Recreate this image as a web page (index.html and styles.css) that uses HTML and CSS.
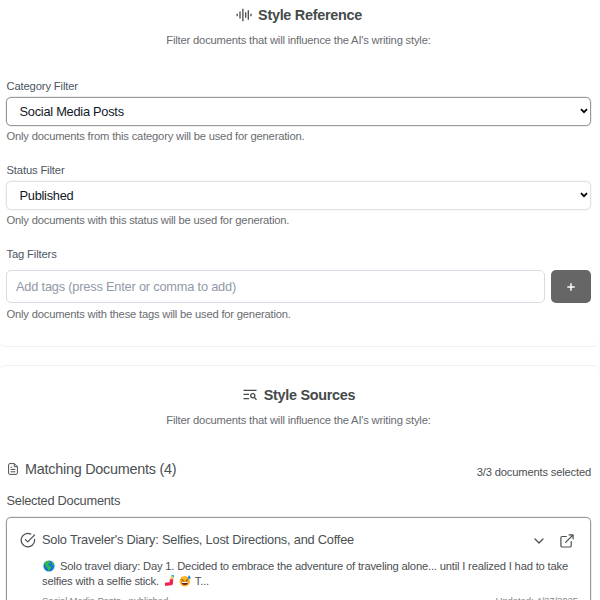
FILE: index.html
```html
<!DOCTYPE html>
<html lang="en">
<head>
<meta charset="utf-8">
<title>Style Reference</title>
<link rel="stylesheet" href="styles.css">
</head>
<body>
<section class="panel panel-reference">
  <h2 class="panel-title">
    <svg class="icon-wave" viewBox="0 0 16 14" fill="none" stroke="currentColor" stroke-width="1.3"><path d="M1.2 5.7v2.600M4 3.500v7M6.900.8v12.400M9.700 4.300v5.400M12.300 2.300v9.400M15 5.700v2.600"/></svg>
    <span>Style Reference</span>
  </h2>
  <p class="panel-intro">Filter documents that will influence the AI's writing style:</p>

  <div class="field">
    <label class="label" for="category">Category Filter</label>
    <div class="select-wrap">
      <select id="category" class="select select-active"><option>Social Media Posts</option></select>
      <svg class="select-arrow" viewBox="0 0 8 6"><path d="M1 1.2l3 3 3-3" fill="none" stroke="currentColor" stroke-width="1.7"/></svg>
    </div>
    <p class="hint">Only documents from this category will be used for generation.</p>
  </div>

  <div class="field">
    <label class="label" for="status">Status Filter</label>
    <div class="select-wrap">
      <select id="status" class="select"><option>Published</option></select>
      <svg class="select-arrow" viewBox="0 0 8 6"><path d="M1 1.2l3 3 3-3" fill="none" stroke="currentColor" stroke-width="1.7"/></svg>
    </div>
    <p class="hint">Only documents with this status will be used for generation.</p>
  </div>

  <div class="field field-tags">
    <label class="label" for="tags">Tag Filters</label>
    <div class="tag-row">
      <input id="tags" class="input" placeholder="Add tags (press Enter or comma to add)">
      <button class="add" aria-label="Add tag"><svg viewBox="0 0 8 8"><path d="M4 .3v7.4M.3 4h7.4" stroke="currentColor" stroke-width="1.5"/></svg></button>
    </div>
    <p class="hint">Only documents with these tags will be used for generation.</p>
  </div>
</section>

<section class="panel panel-sources">
  <h2 class="panel-title">
    <svg class="icon-search" viewBox="0 0 14 12" fill="none" stroke="currentColor" stroke-width="1.3"><path d="M.5 1.4h13M.5 5.4h5.5M.5 9.6h5.5"/><circle cx="9.8" cy="6.8" r="2.1"/><path d="M11.3 8.4l2.2 2.5"/></svg>
    <span>Style Sources</span>
  </h2>
  <p class="panel-intro">Filter documents that will influence the AI's writing style:</p>

  <div class="matching">
    <svg class="icon-doc" viewBox="0 0 10 12" fill="none" stroke="currentColor" stroke-width="1" stroke-linejoin="round"><path d="M6.3.6H1.8Q.6.6.6 1.8v8.4q0 1.2 1.2 1.2h6.4q1.2 0 1.2-1.2V3.7zM6.3.6v3.1h3.1M2.6 4.2h1.6M2.6 6.4h4.8M2.6 8.8h4.8"/></svg>
    <h3 class="matching-title">Matching Documents (4)</h3>
    <span class="count">3/3 documents selected</span>
  </div>
  <h4 class="selected-title">Selected Documents</h4>

  <article class="doc">
    <header class="doc-head">
      <svg class="icon-check" viewBox="0 0 16 16" fill="none" stroke="currentColor" stroke-width="1.25" stroke-linecap="round" stroke-linejoin="round"><path d="M14.600 7.400v.8A6.700 6.700 0 1 1 10.800 2.100"/><path d="M5.400 7.600l2.400 2.300 6.800-7"/></svg>
      <span class="doc-title">Solo Traveler's Diary: Selfies, Lost Directions, and Coffee</span>
      <svg class="icon-chevron" viewBox="0 0 10 6" fill="none" stroke="currentColor" stroke-width="1.3" stroke-linecap="round" stroke-linejoin="round"><path d="M1 1l4 4 4-4"/></svg>
      <svg class="icon-open" viewBox="0 0 14 14" fill="none" stroke="currentColor" stroke-width="1.2" stroke-linecap="round" stroke-linejoin="round"><path d="M6.3 2.5H2.2Q.9 2.5.9 3.8v7.9Q.9 13 2.2 13h7.7q1.3 0 1.3-1.3V7.6M9.1.9h4v4M13 1L5.6 8.4"/></svg>
    </header>
    <div class="doc-body">
      <p class="excerpt"><svg class="emoji emoji-globe" viewBox="0 0 12 12"><circle cx="6" cy="6" r="5.6" fill="#1479cf"/><path d="M1.3 3.1L4 1l2.2.1 1 1.4-1.4 1.3L4.700 5l1.800.8 1.800 1.700-1.500 2.300L5.300 11.100l-.8-3.200L2.600 6.100zM8.600 1.200l2.200 2.200.5 2.500L9 4.200z" fill="#35bd46"/></svg>Solo travel diary: Day 1. Decided to embrace the adventure of traveling alone... until I realized I had to take</p>
      <p class="excerpt"><span>selfies with a selfie stick.</span><svg class="emoji emoji-selfie" viewBox="0 0 12 12"><path d="M8.600 4.200L8.200 8.600 2 9.400" fill="none" stroke="#f0234f" stroke-width="3.400" stroke-linejoin="round"/><path d="M8.300 1.400l1.200 2.700" stroke="#f7bd2b" stroke-width="2.200"/><path d="M8.300.8l2.300-.3v2" fill="none" stroke="#36a7e8" stroke-width="1.100"/></svg><svg class="emoji emoji-smile" viewBox="0 0 12 12"><circle cx="5.800" cy="6.300" r="5.200" fill="#ffb51f"/><path d="M2.500 4.600l2 .9M9 4.600l-2 .9" stroke="#573319" stroke-width="1"/><path d="M2.300 6.800h7q-.4 3.300-3.500 3.300t-3.500-3.300z" fill="#6b1d25"/><path d="M2.800 7h6v1h-6z" fill="#fff"/><path d="M10 .3q3.200 3.500.2 3.800Q7.500 3.800 10 .3z" fill="#198be8"/></svg><span class="rest">T...</span></p>
      <footer class="doc-meta"><span class="doc-source">Social Media Posts · published</span><span>Updated: 4/27/2025</span></footer>
    </div>
  </article>
</section>
</body>
</html>
```

FILE: styles.css
```css
* { box-sizing: border-box; }
html, body { height: 600px; overflow: hidden; }
body { margin: 0; background: #fff; color: #4b5052; font-family: "Liberation Sans", Arial, sans-serif; letter-spacing: -0.18px; }
h2, h3, h4, p { margin: 0; font-weight: 400; }
svg { display: block; flex: none; }

.panel { margin-left: -2px; padding: 0 9px 0 8px; border: 0 solid #f0f1f2; }
.panel-reference { height: 347px; border-bottom-width: 1px; border-radius: 0 0 8px 8px; }
.panel-sources { height: 235px; margin-top: 18px; padding-top: 14px; border-top-width: 1px; border-radius: 8px 8px 0 0; }
.panel-title { display: flex; align-items: center; justify-content: center; height: 30px; padding-left: 1px; font-size: 14.4px; font-weight: 700; letter-spacing: -0.28px; color: #454a4a; }
.icon-wave { width: 16px; height: 14px; margin-right: 6px; }
.icon-search { width: 14px; height: 12px; margin-right: 7px; }
.panel-intro { height: 20px; line-height: 20px; text-align: center; font-size: 11.2px; color: #696c70; }

.field { height: 84px; }
.panel-intro + .field { margin-top: 27px; }
.label { display: block; height: 20px; line-height: 18px; padding-left: 0.5px; font-size: 11.2px; letter-spacing: -0.13px; color: #4b5563; }
.select-wrap { position: relative; }
.select { display: block; width: 100%; height: 29px; padding: 0 12.5px; border: 1px solid #dfe1e7; border-radius: 5px; background: #fff; color: #111827; font: 12.8px "Liberation Sans", Arial, sans-serif; letter-spacing: -0.25px; appearance: none; outline: none; box-shadow: 0 0 0 0.5px #eef0f3; }
.select-active { border-color: #999; box-shadow: 0 0 0 0.5px #ddd; }
.select-arrow { position: absolute; right: 3px; top: 11px; width: 8px; height: 6px; color: #000; }
.hint { height: 22px; line-height: 20px; padding-left: 0.5px; font-size: 11.2px; letter-spacing: -0.19px; color: #696c70; }
.tag-row { display: flex; gap: 6px; height: 33px; margin-top: 5px; }
.field-tags .hint { line-height: 22px; }
.input { flex: 1; min-width: 0; padding: 0 9px; border: 1px solid #d9dce4; border-radius: 5px; font: 12.8px "Liberation Sans", Arial, sans-serif; letter-spacing: -0.2px; }
.input::placeholder { color: #9299a8; opacity: 1; }
.add { display: flex; align-items: center; justify-content: center; width: 40px; padding: 0; border: 0; border-radius: 5px; background: #666; color: #fff; }
.add svg { width: 8px; height: 8px; }

.matching { display: flex; align-items: center; height: 26px; margin-top: 26px; }
.icon-doc { width: 10px; height: 12px; margin: 0 7px 0 2px; }
.matching-title { font-size: 14.4px; letter-spacing: -0.25px; }
.count { margin-left: auto; padding-top: 5px; font-size: 11.2px; }
.selected-title { height: 34px; padding-left: 0.5px; margin-top: 1px; line-height: 36px; font-size: 12.8px; letter-spacing: -0.25px; }

.doc { height: 83px; padding: 11px 12px 0 13px; border: 1px solid #999; border-bottom: 0; border-radius: 5px 5px 0 0; box-shadow: 0 0 0 0.5px #ddd; }
.doc-head { display: flex; align-items: center; height: 20px; }
.icon-check { width: 16px; height: 16px; margin: 1px 6px 0 0; }
.doc-title { flex: 1; font-size: 12.8px; letter-spacing: -0.21px; }
.icon-chevron { width: 10px; height: 6px; margin: 4px 16px 0 0; }
.icon-open { width: 14px; height: 14px; margin: 4px 4px 0 0; }
.doc-body { padding: 9px 0 0 22px; }
.excerpt { display: flex; align-items: center; height: 15px; font-size: 11.2px; white-space: pre; }
.emoji { width: 12px; height: 12px; }
.emoji-globe { margin: 0 5px 0 1px; }
.emoji-selfie { margin-left: 4px; }
.emoji-smile { margin-left: 4px; }
.rest { margin-left: 4px; }
.doc-meta { display: flex; justify-content: space-between; height: 10px; margin-top: 7px; line-height: 11px; font-size: 9.6px; letter-spacing: -0.1px; color: #85888c; }
.doc-source { letter-spacing: -0.17px; }
```
